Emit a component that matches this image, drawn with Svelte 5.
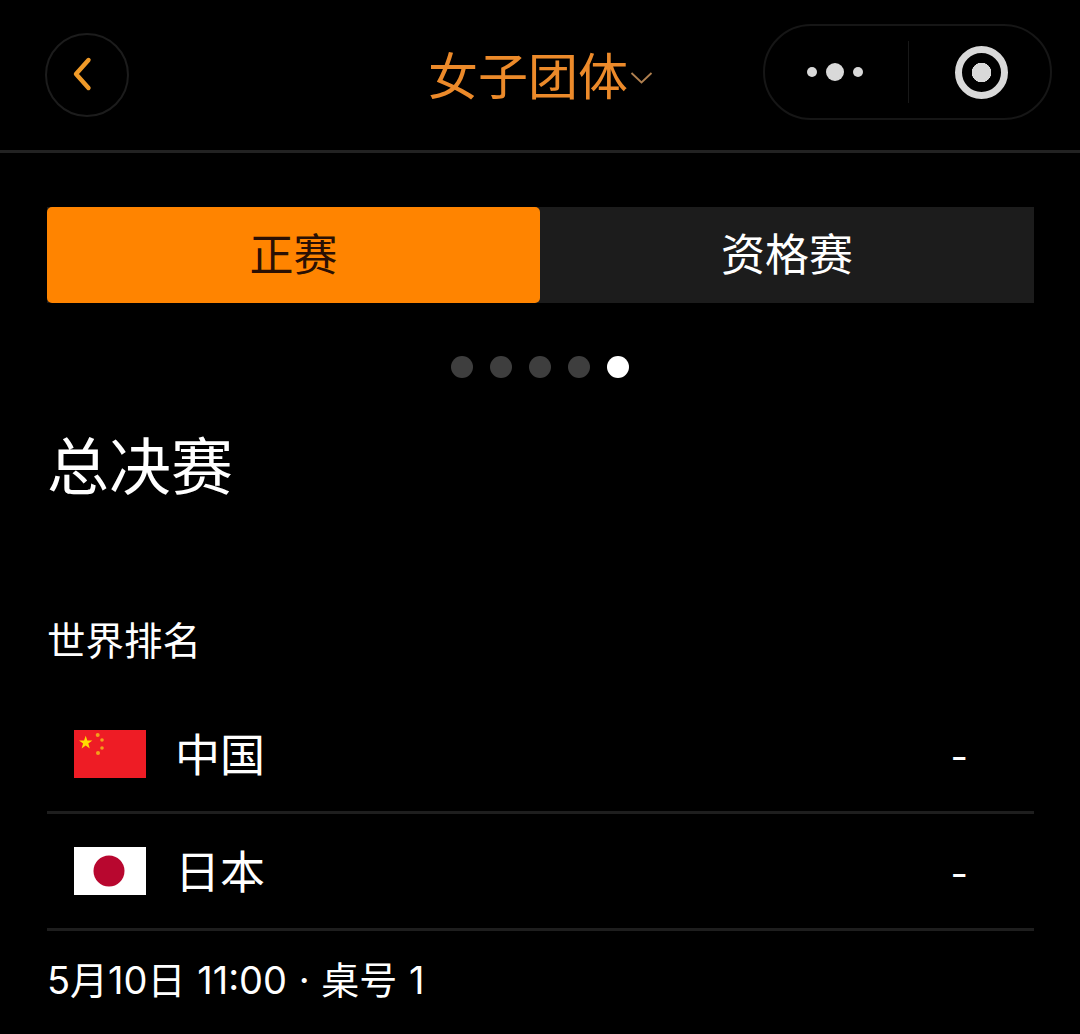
<script>
  const dots = [0, 1, 2, 3, 4];
  let activeDot = 4;
  const rows = [
    { name: "中国", flag: "cn", score: "-" },
    { name: "日本", flag: "jp", score: "-" }
  ];
</script>

<div class="page">
  <header class="nav">
    <button class="back" aria-label="返回">
      <svg width="24" height="36" viewBox="0 0 24 36">
        <path d="M17.5 4 L5 18 L17.5 32" fill="none" stroke="#f09a28" stroke-width="4.4" stroke-linecap="round" stroke-linejoin="round" />
      </svg>
    </button>
    <div class="title">
      <span>女子团体</span>
      <svg class="caret" width="23" height="14" viewBox="0 0 23 14">
        <path d="M1.5 2 L11.5 11.5 L21.5 2" fill="none" stroke="#b08050" stroke-width="1.8" />
      </svg>
    </div>
    <div class="capsule">
      <div class="more">
        <i class="small"></i><i class="big"></i><i class="small"></i>
      </div>
      <div class="sep"></div>
      <div class="close"><i></i></div>
    </div>
  </header>

  <main class="content">
    <div class="tabs">
      <div class="tab active">正赛</div>
      <div class="tab">资格赛</div>
    </div>

    <div class="dots">
      {#each dots as d}
        <span class="dot" class:on={d === activeDot}></span>
      {/each}
    </div>

    <h1>总决赛</h1>
    <div class="label">世界排名</div>

    <div class="rows">
      {#each rows as row}
        <div class="row">
          {#if row.flag === "cn"}
            <svg class="flag" width="72" height="48" viewBox="0 0 72 48">
              <rect width="72" height="48" fill="#ee1c25" />
              <polygon points="11.7,5.7 13.3,10.5 18.4,10.5 14.3,13.5 15.8,18.4 11.7,15.5 7.6,18.4 9.1,13.5 5,10.5 10.1,10.5" fill="#ffde00" />
              <circle cx="23.7" cy="5" r="2" fill="#f2a01c" />
              <circle cx="28" cy="10" r="1.8" fill="#f2a01c" />
              <circle cx="28" cy="18" r="1.8" fill="#f2a01c" />
              <circle cx="24" cy="23" r="2" fill="#f2a01c" />
            </svg>
          {:else}
            <svg class="flag" width="72" height="48" viewBox="0 0 72 48">
              <rect width="72" height="48" fill="#fff" />
              <circle cx="35" cy="24" r="15.5" fill="#b8072f" />
            </svg>
          {/if}
          <span class="name">{row.name}</span>
          <span class="score">{row.score}</span>
        </div>
      {/each}
    </div>

    <div class="meta">5月10日 11:00 · 桌号 1</div>
  </main>
</div>

<style>
  :global(body) {
    background: #000;
  }

  .page {
    height: 1034px;
    overflow: hidden;
    background: #000;
    color: #fff;
    font-family: "Inter", "Noto Sans CJK SC", sans-serif;
  }

  .nav {
    position: relative;
    height: 153px;
    box-sizing: border-box;
    border-bottom: 3px solid #222;
    display: flex;
    align-items: flex-start;
    justify-content: space-between;
    padding: 24px 28px 0 45px;
  }

  .back {
    width: 84px;
    height: 84px;
    margin-top: 9px;
    border: 2px solid #1c1c1c;
    border-radius: 50%;
    background: none;
    padding: 0 8px 3px 0;
    display: flex;
    align-items: center;
    justify-content: center;
  }

  .title {
    position: absolute;
    left: 428px;
    top: 43px;
    display: flex;
    align-items: center;
    color: #ec8a2a;
    font-size: 50px;
    line-height: 60px;
    font-family: "Noto Sans CJK SC", sans-serif;
    font-weight: 400;
  }

  .caret {
    margin-top: 10px;
    margin-left: 2px;
  }

  .capsule {
    box-sizing: border-box;
    width: 289px;
    height: 96px;
    border: 2px solid #161616;
    border-radius: 48px;
    display: flex;
    align-items: center;
  }

  .more {
    width: 140px;
    margin-right: 3px;
    display: flex;
    align-items: center;
    justify-content: center;
    gap: 9px;
  }

  .more i {
    display: block;
    border-radius: 50%;
    background: #d9d9d9;
  }

  .small {
    width: 10px;
    height: 10px;
  }

  .big {
    width: 18px;
    height: 18px;
  }

  .sep {
    width: 1px;
    height: 62px;
    background: #181818;
  }

  .close {
    flex: 1;
    padding-left: 4px;
    display: flex;
    justify-content: center;
  }

  .close i {
    box-sizing: border-box;
    width: 53px;
    height: 53px;
    border: 7px solid #d9d9d9;
    border-radius: 50%;
    background: radial-gradient(circle, #d9d9d9 0 9.5px, transparent 10px);
  }

  .content {
    padding: 54px 46px 0 47px;
  }

  .tabs {
    display: flex;
    height: 96px;
    background: #1c1c1c;
  }

  .tab {
    flex: 1;
    padding-bottom: 7px;
    display: flex;
    align-items: center;
    justify-content: center;
    font-size: 44px;
    font-family: "Noto Sans CJK SC", sans-serif;
    font-weight: 400;
    color: #fff;
  }

  .tab.active {
    flex: 0 0 493px;
    background: #ff8400;
    color: #2a1004;
    border-radius: 5px;
  }

  .dots {
    display: flex;
    justify-content: center;
    gap: 17px;
    margin-top: 53px;
    padding-right: 2px;
  }

  .dot {
    width: 22px;
    height: 22px;
    border-radius: 50%;
    background: #3e3e3e;
  }

  .dot.on {
    background: #fff;
  }

  h1 {
    margin: 40px 0 0;
    font-size: 62px;
    line-height: 90px;
    font-weight: 400;
    font-family: "Noto Sans CJK SC", sans-serif;
  }

  .label {
    margin-top: 105px;
    font-size: 38.5px;
    line-height: 50px;
    font-family: "Noto Sans CJK SC", sans-serif;
  }

  .rows {
    margin-top: 34px;
  }

  .row {
    height: 117px;
    box-sizing: border-box;
    border-bottom: 3px solid #1e1e1e;
    display: flex;
    align-items: center;
    padding-left: 27px;
    padding-right: 66px;
  }

  .flag {
    flex: none;
    display: block;
  }

  .name {
    margin-left: 29px;
    padding-bottom: 4px;
    font-size: 45px;
    font-family: "Noto Sans CJK SC", sans-serif;
    flex: 1;
  }

  .score {
    padding-top: 3px;
    font-size: 38px;
    font-family: "Inter", sans-serif;
  }

  .meta {
    margin-top: 16px;
    font-size: 38px;
    line-height: 66px;
    word-spacing: 1px;
  }
</style>
